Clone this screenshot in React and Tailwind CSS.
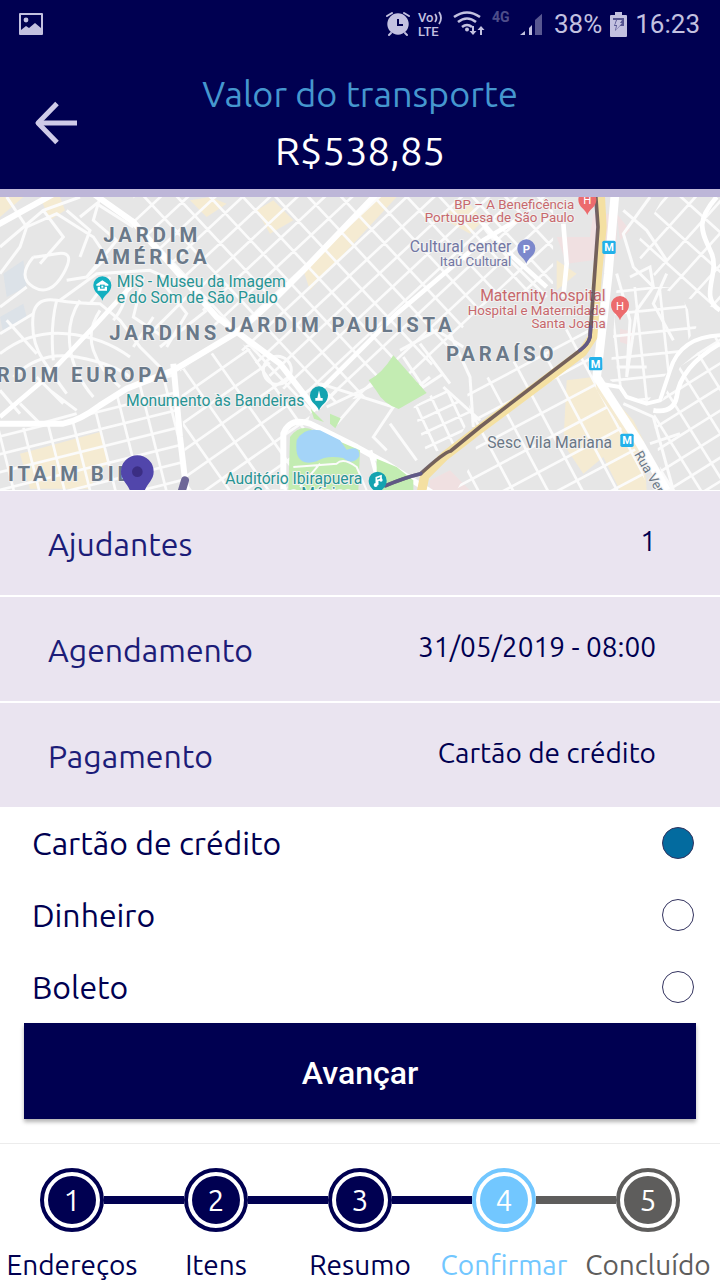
import React, { useState } from 'react';
import clsx from 'clsx';

const SUMMARY = [
    { label: 'Ajudantes', value: '1' },
    { label: 'Agendamento', value: '31/05/2019 - 08:00' },
    { label: 'Pagamento', value: 'Cartão de crédito' },
];

const PAYMENT_OPTIONS = ['Cartão de crédito', 'Dinheiro', 'Boleto'];

const STEPS = [
    { label: 'Endereços', status: 'done' },
    { label: 'Itens', status: 'done' },
    { label: 'Resumo', status: 'done' },
    { label: 'Confirmar', status: 'current' },
    { label: 'Concluído', status: 'pending' },
];

const STEP_COLORS = {
    done: { text: 'text-[#000051]', bg: 'bg-[#000051]', border: 'border-[#000051]' },
    current: { text: 'text-[#72c7ff]', bg: 'bg-[#72c7ff]', border: 'border-[#72c7ff]' },
    pending: { text: 'text-[#5e5d5c]', bg: 'bg-[#5e5d5c]', border: 'border-[#5e5d5c]' },
};

function StatusBar() {
    return (
        <div className="flex h-12 items-center justify-between pl-[19px] pr-5 font-['Roboto',sans-serif] text-[26px] text-[#c3c1e0]">
            <svg width="24" height="22" viewBox="0 0 24 22" fill="currentColor">
                <path fillRule="evenodd" d="M1 0h22a1 1 0 0 1 1 1v20a1 1 0 0 1-1 1H1a1 1 0 0 1-1-1V1a1 1 0 0 1 1-1Zm1 2v15l5-4 3 2 6-5 6 5V2H2Z" />
                <circle cx="7" cy="7" r="2.4" />
            </svg>
            <div className="flex items-center gap-2">
                <svg width="156" height="32" viewBox="386 8 156 32" fill="currentColor">
                    {/* alarm */}
                    <g stroke="currentColor" strokeLinecap="round" fill="none">
                        <path d="m387 16 5-3M409 16l-5-3" strokeWidth="2" />
                        <path d="m391 33-2 2M405 33l2 2" strokeWidth="2" />
                    </g>
                    <circle cx="398" cy="24" r="10.700" />
                    <path d="M398 19v6h5" stroke="#000051" strokeWidth="2" fill="none" />
                    {/* volte */}
                    <text x="418" y="22" fontSize="13" fontWeight="500">Vo</text>
                    <path d="M435 14q3 4 0 8M439 12q4 6 0 12" stroke="currentColor" strokeWidth="1.800" fill="none" />
                    <text x="418" y="36" fontSize="13" fontWeight="500">LTE</text>
                    {/* wifi */}
                    <g stroke="currentColor" strokeWidth="2.600" fill="none">
                        <path d="M454 17q13-9 26 0" />
                        <path d="M458 22q9-7 18 0" />
                        <path d="M462 27q5-4 10 0" />
                    </g>
                    <circle cx="467" cy="29.500" r="2" />
                    <path d="M473 26v8M481 35v-8" stroke="currentColor" strokeWidth="2" />
                    <path d="m469.500 31 3.500 4 3.500-4ZM477.500 30l3.500-4 3.500 4Z" />
                    <text x="492" y="22" fontSize="14" fontWeight="700" opacity="0.4">4G</text>
                    {/* signal */}
                    <path d="m520 35 5-4v4ZM529 28l3-3v10h-3Z" />
                    <path d="M535 20l9-8v23h-9Z" opacity="0.45" />
                </svg>
                <span className="pl-1">38%</span>
                <svg width="17" height="25" viewBox="0 0 17 25">
                    <path d="M5 0h7v3h4a1 1 0 0 1 1 1v20a1 1 0 0 1-1 1H1a1 1 0 0 1-1-1V4a1 1 0 0 1 1-1h4Z" fill="currentColor" />
                    <path d="M3 6h11v8h-4l-5 5 1-5H4l2-6H3Z" fill="#565591" />
                    <path d="M7 8h5l-2 3h2l-6 7 1-5H5Z" fill="currentColor" />
                </svg>
                <span>16:23</span>
            </div>
        </div>
    );
}

function Header() {
    return (
        <header className="border-b-8 border-[#bdb6d8] bg-[#000051] pb-[9px]">
            <StatusBar />
            <div className="grid grid-cols-[112px_1fr_112px] items-center pt-[18px]">
                <button type="button" aria-label="Voltar" className="ml-[34px] w-11 text-[#cfcbe8]">
                    <svg viewBox="0 0 44 44" fill="none" stroke="currentColor" strokeWidth="5">
                        <path d="M4 22h39" />
                        <path d="M23 2.500 4 22l19 19.500" strokeLinejoin="round" />
                    </svg>
                </button>
                <div className="text-center">
                    <h1 className="text-[36px] leading-[56px] text-[#4597cf]">Valor do transporte</h1>
                    <p className="text-[40px] leading-[58px] text-white">R$538,85</p>
                </div>
            </div>
        </header>
    );
}

// Regular city blocks: two sets of parallel streets, cut to the outline of a district
function Blocks({ id, outline, cx, cy, angle, gapX, gapY, size = 700 }) {
    const lines = [];
    for (let i = -size; i <= size; i += gapX) lines.push(`M${i} ${-size}V${size}`);
    for (let i = -size; i <= size; i += gapY) lines.push(`M${-size} ${i}H${size}`);
    return (
        <g clipPath={`url(#${id})`}>
            <clipPath id={id}>
                <path d={outline} />
            </clipPath>
            <path
                d={lines.join('')}
                transform={`translate(${cx} ${cy}) rotate(${angle})`}
                fill="none"
                stroke="#fbfbfb"
                strokeWidth="8"
            />
        </g>
    );
}

function Pin({ x, y, color, children }) {
    return (
        <g transform={`translate(${x} ${y})`}>
            <path d="M0 44C-5 26-27 21-27-2a27 27 0 0 1 54 0C27 21 5 26 0 44Z" fill={color} />
            {children}
        </g>
    );
}

function Metro({ x, y }) {
    return (
        <g transform={`translate(${x} ${y})`}>
            <rect x="-20" y="-20" width="40" height="40" rx="5" fill="#22b1ea" />
            <text y="12" fontSize="33" fontWeight="700" fill="#fff" textAnchor="middle">M</text>
        </g>
    );
}

function RouteMap() {
    return (
        <svg
            viewBox="0 20 2160 879"
            className="block w-full bg-[#e6e6e6] font-['Roboto',sans-serif]"
            role="img"
            aria-label="Mapa do trajeto"
        >
            {/* commercial areas */}
            <path
                d="M0 20h70L0 80ZM120 20h60l15 40-45 30ZM570 30l60-10 50 20-60 40ZM60 790l240-65 25 90-60 80H90ZM770 60l50-30 60 60-70 40ZM1080 70l50-50h60L930 300l-20-60ZM1320 80l80-50 50 60-40 40ZM1670 210l60 40-60 50ZM1700 570l80-10 120 130 30 60 10 150H1860l-50-100-60 50-60-90Z"
                fill="#f5ebd2"
            />
            <path
                d="M1670 140h100l10-70h70v130l-150 20ZM1850 70l40 50-30 30ZM1860 415l40 10-10 40-30-10ZM1290 870l60-30 60 60h-120Z"
                fill="#f0e0e1"
            />
            <path d="M10 250l60-40 10 80-60 30ZM0 380l70-40 10 40-70 50Z" fill="#dce2e8" />

            {/* city blocks */}
            <Blocks id="paulista" outline="M400 20h1260v260l-220 70-200 240-250 50-60 30-290-270L400 95Z" cx={1000} cy={340} angle={-43} gapX={72} gapY={56} />
            <Blocks id="itaim" outline="M0 720 190 700 300 650l90-60 130-50 40 360H0Z" cx={280} cy={800} angle={-14} gapX={74} gapY={52} />
            <Blocks id="nova-conceicao" outline="M540 540l170-90 240 160-90 290H560Z" cx={700} cy={700} angle={-35} gapX={96} gapY={68} />
            <Blocks id="vila-mariana" outline="M1400 600l360-220 30 220 130 200 20 100H1370l60-110Z" cx={1600} cy={700} angle={-28} gapX={92} gapY={76} />
            <Blocks id="moema" outline="M1240 650l90-60 90 80-60 100-80 20Z" cx={1300} cy={700} angle={-25} gapX={52} gapY={42} />
            <Blocks id="cambuci" outline="M1990 20h170v340l-160-60-100-120Z" cx={2050} cy={150} angle={-48} gapX={88} gapY={64} />
            <Blocks id="aclimacao" outline="M1850 290h180l60 120-150 230-110-70Z" cx={1950} cy={400} angle={-6} gapX={74} gapY={66} />
            <Blocks id="saude" outline="M1960 680l80-150 120-100v470h-170Z" cx={2060} cy={700} angle={-32} gapX={70} gapY={60} />

            {/* local streets */}
            <g fill="none" stroke="#fbfbfb" strokeWidth="9">
                <path d="M0 170 130 60 240 20M0 250l60-80 20-60 90-40 110 70 40 60-60 60-60 10M80 110 20 20M100 200q-50 60 0 90t90-40-20-60-70 10M130 60l60 80-70 80M200 60l70 60-30 80M0 350l80-60M240 80l50-40 110 70M180 330l110-80 160-10 90 40" />
                <path d="M0 430 100 370q10-50 70-40t130 10l60 50 60 80 60 60M100 370q-10 80 30 140t70 100M170 330q-20 80-10 180M240 330q-40 60-30 140t70 150M300 360q-40 60-20 120t80 110M0 490q90-70 200-60t190 70M40 560q80-80 190-60t160 60M20 390l90 100M150 600l80 60M60 640l60 60 110-30M110 560l80 80M0 600l60 70" />
                <path d="M330 260q-30 40-60 80M380 250q10 80-40 140M430 260l-30 120 90 60M460 380l-60 90M300 20l-20 70 70 60-90 110M490 280l70 90-60 100M560 320l-110 110M620 360l-140 110" />
                <path d="M960 580l220 70 110-90M1010 600l-60 60M1080 620l-70 80M1180 650l-60 90 40 40M1170 700l80 110M1330 590l110 100M790 540a42 42 0 1 1 84 0 42 42 0 1 1-84 0M1200 480l110-60 80 50M1210 500l60 90 60-40M1260 460l90 120M1350 430l60 130 10 150M1170 560l-190 90" />
                <path d="M1450 110l80 100 110 110M1850 250l40 140-10 170M1890 260l60-30 10 60-50 70-30 200M1850 530h90M2000 250l-40 90 60 110M1950 20l-80 110 30 100 60 60M1870 60l70 60 60 90M1870 640l90 40 60 220M1950 760l90-30" />
            </g>

            {/* avenues */}
            <g fill="none" stroke="#fff" strokeWidth="18" strokeLinejoin="round">
                <path d="M-10 105 180 0" />
                <path d="M280 10 400 95l140 160 110 125 190 140 70 90 40 50" />
                <path d="M0 680 130 570 290 400l110-120" strokeWidth="14" />
                <path d="M0 700h190q50-10 110-55l80-50 140-55 200-120 100-90 90-90L1130 10" />
                <path d="M520 520l20 220 20 170" />
                <path d="M950 610l240-240 260-220 100-60" strokeWidth="14" />
                <path d="M850 910V730q20-50 80-30l140 70 90 50 140 90" />
                <path d="M1110 780l30 110M1440 90l100 110 100 90M1690 100l10 120-10 100" strokeWidth="14" />
                <path d="M1845 10l-20 240-35 310 130 200 80 140" strokeWidth="26" />
                <path d="M1800 580l60 10 20 30 60 20 40-10 30-90q30-100 150-105" strokeWidth="12" />
                <path d="M2150 20c-70 80-40 110-15 170s-40 130 25 170M1960 660q60 10 70-40 10-90 130-160" strokeWidth="14" />
            </g>

            {/* parks and water */}
            <g fill="#c3ecb2">
                <path d="M1180 495 1280 608l-84 48q-46-15-68-56l-22-30q40-20 74-75Z" />
                <path d="M932 655l40 40-30-10ZM990 670l32 14-16 30-16-14ZM870 740q30-40 70-20l140 60-5 120H865Z" />
                <path d="M1130 805l60 25 50 40v30h-110Z" />
            </g>
            <path d="M890 750q20-40 70-30l60 30 20 28q40-15 38 20-20 30-48 5-50-10-80 10-70 20-60-63Z" fill="#a4d4f8" />
            <path d="M880 830l130-10q20-20 60 10l30 70M900 890l60-70" fill="none" stroke="#fbfbfb" strokeWidth="6" />

            {/* highway under the labels */}
            <path
                d="M1800 0l6 110-14 140-14 190-30 45-310 232-104 80-60 60-12 60"
                fill="none"
                stroke="#f4e0a2"
                strokeWidth="28"
                strokeLinejoin="round"
            />

            {/* places */}
            <g fill="#279494" fontSize="47" stroke="#f2f2f2" strokeWidth="6" paintOrder="stroke">
                <text x="350" y="290">MIS - Museu da Imagem</text>
                <text x="350" y="337">e do Som de São Paulo</text>
                <text x="378" y="648">Monumento às Bandeiras</text>
                <text x="760" y="927">Som e Música</text>
                <text x="676" y="881">Auditório Ibirapuera</text>
            </g>
            <g fill="#c7686c" fontSize="40" textAnchor="end" stroke="#f2f2f2" strokeWidth="6" paintOrder="stroke">
                <text x="1723" y="56">BP – A Beneficência</text>
                <text x="1723" y="96">Portuguesa de São Paulo</text>
                <text x="1817" y="332" fontSize="47">Maternity hospital</text>
                <text x="1817" y="373">Hospital e Maternidade</text>
                <text x="1817" y="413">Santa Joana</text>
            </g>

            {/* route */}
            <g fill="none" strokeLinecap="round" strokeLinejoin="round">
                <path d="M1786 0l8 110-10 140-14 190q-4 20-30 40l-300 230-88 72q-20 4-90 68-50 12-105 36" stroke="#4f3d46" strokeWidth="11" opacity="0.78" />
                <path d="M1772 410l-2 30q-4 20-30 40M1262 850q-50 12-105 36" stroke="#5c568e" strokeWidth="11" opacity="0.8" />
                <path d="M555 870l-12 40" stroke="#6e6798" strokeWidth="24" />
            </g>

            {/* neighbourhoods */}
            <g fontSize="61" fontWeight="700" fill="#6a7989" stroke="#f2f2f2" strokeWidth="5" paintOrder="stroke" className="tracking-[0.19em]">
                <text x="310" y="155">JARDIM</text>
                <text x="284" y="220">AMÉRICA</text>
                <text x="328" y="449">JARDINS</text>
                <text x="674" y="425">JARDIM PAULISTA</text>
                <text x="-10" y="575">RDIM EUROPA</text>
                <text x="1338" y="511">PARAÍSO</text>
                <text x="24" y="871">ITAIM BIBI</text>
            </g>
            <g fill="#7377a3" textAnchor="end" stroke="#f2f2f2" strokeWidth="6" paintOrder="stroke">
                <text x="1534" y="186" fontSize="47">Cultural center</text>
                <text x="1534" y="226" fontSize="40">Itaú Cultural</text>
            </g>
            <g fill="#6a7785" stroke="#f2f2f2" strokeWidth="6" paintOrder="stroke">
                <text x="1462" y="772" fontSize="47">Sesc Vila Mariana</text>
                <text transform="translate(1902 792) rotate(60)" fontSize="40">Rua Vergueiro</text>
            </g>

            <Pin x={307} y={287} color="#12afc0">
                <path d="M-18-5 0-17l18 12v4h-36ZM-14 2h28v12h-28Z" fill="#fff" />
                <path d="M-7-4H7V8H-7Z" fill="#12afc0" />
                <path d="M-3-1H3V5H-3Z" fill="#fff" />
            </Pin>
            <Pin x={957} y={617} color="#14a3b0">
                <path d="m0-17 5 23h6v8h-22V6h6Z" fill="#fff" />
            </Pin>
            <Pin x={1133} y={873} color="#14a3b0">
                <path d="M-4 11V-11l14-5V-6L0-3v14" fill="none" stroke="#fff" strokeWidth="5" />
                <circle cx="-6" cy="11" r="6" fill="#fff" />
                <circle cx="10" cy="-4" r="5" fill="#fff" />
            </Pin>
            <Pin x={1579} y={176} color="#7c88cc">
                <text y="12" fontSize="34" fontWeight="700" fill="#fff" textAnchor="middle">P</text>
            </Pin>
            <Pin x={1762} y={30} color="#ec6b6d">
                <text y="10" fontSize="34" fill="#fff" textAnchor="middle">H</text>
            </Pin>
            <Pin x={1860} y={346} color="#ec6b6d">
                <text y="12" fontSize="34" fill="#fff" textAnchor="middle">H</text>
            </Pin>
            <Metro x={1827} y={171} />
            <Metro x={1787} y={520} />
            <Metro x={1881} y={750} />

            <path d="M412 795a49 49 0 0 1 49 49c0 25-20 35-28 60h-42c-8-25-28-35-28-60a49 49 0 0 1 49-49Z" fill="#5146ab" />
            <circle cx="412" cy="844" r="16" fill="#3b2e83" />
        </svg>
    );
}

function Step({ number, label, status, previous, isLast }) {
    const colors = STEP_COLORS[status];
    const lineColor = from => (from === 'done' ? STEP_COLORS.done.bg : STEP_COLORS.pending.bg);
    return (
        <li className={clsx('flex flex-col items-center', colors.text)}>
            <div className="flex w-full items-center">
                <span className={clsx('h-2 flex-1', previous && lineColor(previous))} />
                <span className={clsx('rounded-full border-4 bg-white p-1', colors.border)}>
                    <span className={clsx('flex size-12 items-center justify-center rounded-full text-[30px] text-white', colors.bg)}>
                        {number}
                    </span>
                </span>
                <span className={clsx('h-2 flex-1', !isLast && lineColor(status))} />
            </div>
            <span className="mt-[18px] text-[28px] leading-[30px] whitespace-nowrap">{label}</span>
        </li>
    );
}

export default function App() {
    const [payment, setPayment] = useState(PAYMENT_OPTIONS[0]);

    return (
        <div className="bg-white font-['Ubuntu','Noto_Sans',sans-serif] text-[#000051]">
            <Header />
            <RouteMap />

            <dl className="flex flex-col gap-[2px] border-t border-white">
                {SUMMARY.map(item => (
                    <div key={item.label} className="flex h-[104px] justify-between bg-[#eae4f0] pl-12 pr-16">
                        <dt className="pt-8 text-[32px] leading-[42px] text-[#1c1c78]">{item.label}</dt>
                        <dd className="pt-7 text-[28px] leading-[44px]">{item.value}</dd>
                    </div>
                ))}
            </dl>

            <fieldset>
                <legend className="sr-only">Forma de pagamento</legend>
                {PAYMENT_OPTIONS.map(option => (
                    <label key={option} className="flex h-[72px] items-center justify-between pl-8 pr-[26px] text-[32px]">
                        {option}
                        <input
                            type="radio"
                            name="payment"
                            checked={payment === option}
                            onChange={() => setPayment(option)}
                            className="size-8 appearance-none rounded-full border border-[#33335f] checked:bg-[#036b9f]"
                        />
                    </label>
                ))}
            </fieldset>

            <div className="px-6 pb-6">
                <button
                    type="button"
                    className="h-24 w-full bg-[#000051] pt-1 font-['Roboto',sans-serif] text-[32px] font-medium text-white shadow-[0_3px_4px_rgba(0,0,0,0.3)]"
                >
                    Avançar
                </button>
            </div>

            <ol className="grid grid-cols-5 border-t border-[#ececec] pt-6">
                {STEPS.map((step, i) => (
                    <Step
                        key={step.label}
                        number={i + 1}
                        label={step.label}
                        status={step.status}
                        previous={STEPS[i - 1]?.status}
                        isLast={i === STEPS.length - 1}
                    />
                ))}
            </ol>
        </div>
    );
}
